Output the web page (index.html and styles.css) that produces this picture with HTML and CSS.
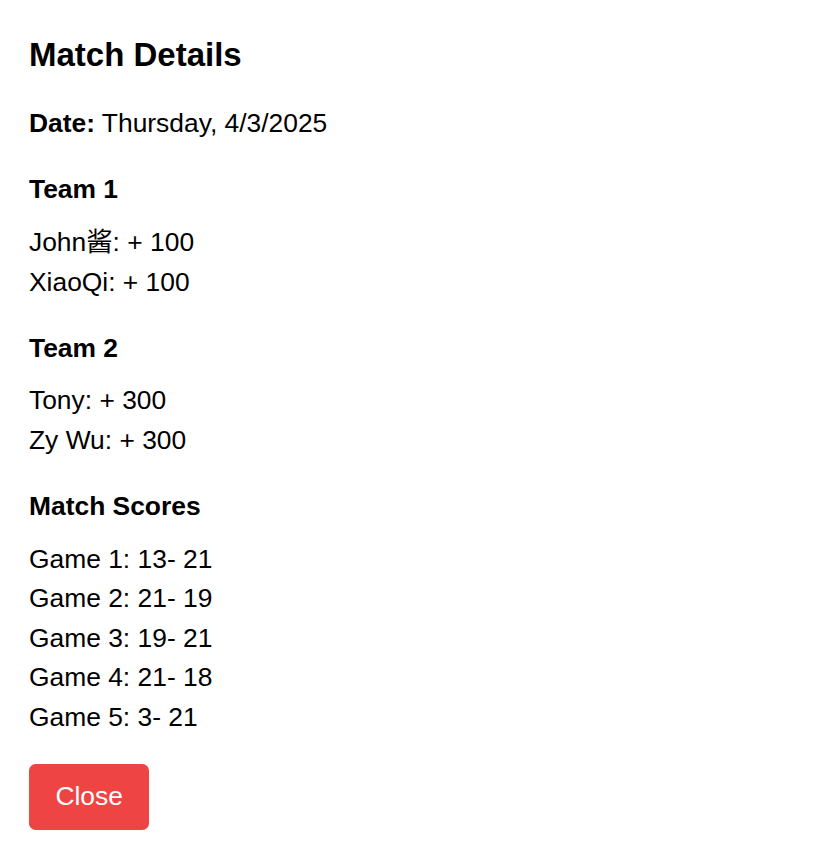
FILE: index.html
```html
<!DOCTYPE html>
<html lang="en">
<head>
<meta charset="utf-8">
<title>Match Details</title>
<link rel="stylesheet" href="styles.css">
</head>
<body>
<main class="details">
  <h2 class="title">Match Details</h2>
  <p class="date"><strong>Date:</strong> Thursday, 4/3/2025</p>
  <section class="section">
    <h3 class="heading">Team 1</h3>
    <ul class="list">
      <li>John酱: + 100</li>
      <li>XiaoQi: + 100</li>
    </ul>
  </section>
  <section class="section">
    <h3 class="heading">Team 2</h3>
    <ul class="list">
      <li>Tony: + 300</li>
      <li>Zy Wu: + 300</li>
    </ul>
  </section>
  <section class="section">
    <h3 class="heading">Match Scores</h3>
    <ul class="list">
      <li>Game 1: 13- 21</li>
      <li>Game 2: 21- 19</li>
      <li>Game 3: 19- 21</li>
      <li>Game 4: 21- 18</li>
      <li>Game 5: 3- 21</li>
    </ul>
  </section>
  <button class="close-btn" type="button">Close</button>
</main>
</body>
</html>
```

FILE: styles.css
```css
html, body {
  margin: 0;
  padding: 0;
  background: #ffffff;
}
body {
  font-family: "Liberation Sans", Arial, "Noto Sans CJK SC", sans-serif;
  color: #000000;
  font-size: 26.4px;
  line-height: 39.6px;
}
.details {
  padding: 31.6px 29px 20px 29px;
  display: flex;
  flex-direction: column;
  align-items: flex-start;
}
.title {
  margin: 0 0 26.4px 0;
  font-size: 33px;
  line-height: 46.2px;
  font-weight: 700;
}
.date {
  margin: 0 0 26.4px 0;
}
.date strong {
  font-weight: 700;
}
.section {
  margin: 0 0 26.4px 0;
  align-self: stretch;
}
.heading {
  margin: 0 0 13.2px 0;
  font-size: 26.4px;
  line-height: 39.6px;
  font-weight: 700;
}
.list {
  list-style: none;
  margin: 0;
  padding: 0;
}
.close-btn {
  font-family: "Liberation Sans", Arial, sans-serif;
  font-size: 26.4px;
  line-height: 39.6px;
  padding: 13.2px 26.4px;
  border: none;
  border-radius: 6.6px;
  background: #ef4444;
  color: #ffffff;
  cursor: pointer;
}
```
